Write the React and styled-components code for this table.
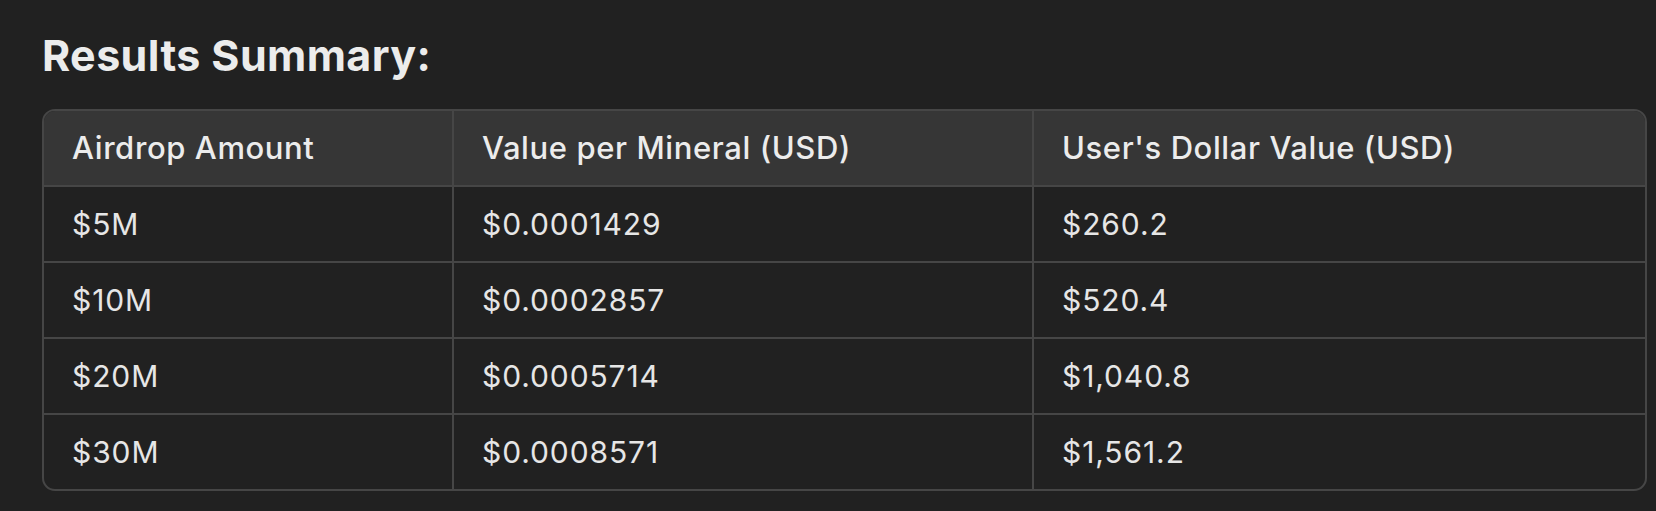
import React from 'react'
import styled, { createGlobalStyle } from 'styled-components'

const GlobalStyle = createGlobalStyle`
  html, body {
    margin: 0;
    padding: 0;
    background: #212121;
  }
  body {
    font-family: Inter, "Noto Sans", "Liberation Sans", sans-serif;
    color: #ececec;
  }
`

const Page = styled.div`
  padding: 30px 9px 22px 42px;
  background: #212121;
  min-height: 511px;
  box-sizing: border-box;
`

const Title = styled.h3`
  margin: 0 0 27px;
  font-size: 43px;
  line-height: 1.2;
  font-weight: 700;
  letter-spacing: 0.4px;
  color: #ececec;
`

const Table = styled.table`
  width: 100%;
  table-layout: fixed;
  border-collapse: separate;
  border-spacing: 0;
  border: 2px solid #464646;
  border-radius: 13px;
  overflow: hidden;
`

const HeadCell = styled.th`
  box-sizing: border-box;
  width: ${p => p.$width || 'auto'};
  height: 76px;
  padding: 0 28px;
  text-align: left;
  font-size: 31px;
  font-weight: 500;
  letter-spacing: 0.6px;
  background: #363636;
  color: #ececec;
  border-bottom: 2px solid #464646;
  border-right: 2px solid #464646;
  &:last-child { border-right: none; }
`

const Row = styled.tr`
  &:last-child td {
    border-bottom: none;
    height: 74px;
  }
`

const Cell = styled.td`
  box-sizing: border-box;
  height: 76px;
  padding: 0 28px;
  font-size: 30px;
  font-weight: 400;
  letter-spacing: 0.9px;
  color: #e6e6e6;
  border-bottom: 2px solid #464646;
  border-right: 2px solid #464646;
  &:last-child { border-right: none; }
`

const rows = [
  ['$5M', '$0.0001429', '$260.2'],
  ['$10M', '$0.0002857', '$520.4'],
  ['$20M', '$0.0005714', '$1,040.8'],
  ['$30M', '$0.0008571', '$1,561.2'],
]

export default function App() {
  return (
    <Page>
      <GlobalStyle />
      <Title>Results Summary:</Title>
      <Table>
        <thead>
          <tr>
            <HeadCell $width="410px">Airdrop Amount</HeadCell>
            <HeadCell $width="580px">Value per Mineral (USD)</HeadCell>
            <HeadCell>User's Dollar Value (USD)</HeadCell>
          </tr>
        </thead>
        <tbody>
          {rows.map(r => (
            <Row key={r[0]}>
              {r.map((v, i) => <Cell key={i}>{v}</Cell>)}
            </Row>
          ))}
        </tbody>
      </Table>
    </Page>
  )
}
